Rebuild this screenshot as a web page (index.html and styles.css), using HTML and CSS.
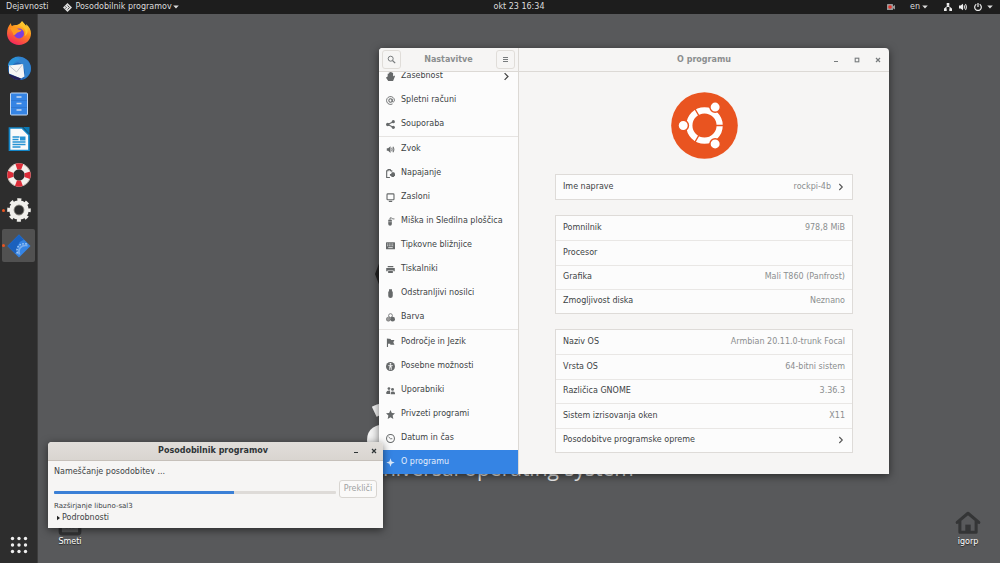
FILE: index.html
```html
<!DOCTYPE html>
<html lang="sl">
<head>
<meta charset="utf-8">
<meta name="viewport" content="width=device-width, initial-scale=1">
<title>Nastavitve</title>
<link rel="stylesheet" href="styles.css">
</head>
<body>
<svg class="defs" aria-hidden="true">
  <symbol id="chevron" viewBox="0 0 8 8"><path d="M2.3 1l3 3-3 3" fill="none" stroke="currentColor" stroke-width="1.1"/></symbol>
  <symbol id="caret" viewBox="0 0 8 8"><path d="M1.2 2.500h5.600L4 5.600z" fill="currentColor"/></symbol>
  <symbol id="min" viewBox="0 0 8 8"><path d="M2 5.500h4" stroke="currentColor"/></symbol>
  <symbol id="close" viewBox="0 0 8 8"><path d="M2 2l4 4M6 2L2 6" stroke="currentColor" stroke-width="1.2"/></symbol>
</svg>

<header class="topbar">
  <div class="topbar-group">
    <button class="top-item" type="button">Dejavnosti</button>
    <button class="top-item app-menu" type="button">
      <svg class="app-icon" viewBox="0 0 8 8"><path d="M4 0l4 4-4 4-4-4z" fill="#ddd"/><path d="M4 2.200L5.800 4 4 5.800M2 3l1 1-1 1" fill="none" stroke="#222" stroke-width=".7"/></svg>
      Posodobilnik programov
      <svg class="caret"><use href="#caret"/></svg>
    </button>
  </div>
  <button class="top-item clock" type="button">okt 23 16:34</button>
  <div class="topbar-group topbar-end">
    <svg class="icon" viewBox="0 0 8 8"><rect y="1" width="6" height="6" rx=".6" fill="#999"/><path d="M6 3.300L8 2v4.500L6 5.200z" fill="#999"/><circle cx="3" cy="4" r="1.800" fill="#e8352c"/></svg>
    <button class="top-item lang" type="button">en<svg class="caret"><use href="#caret"/></svg></button>
    <button class="top-item status" type="button" aria-label="Sistem">
      <svg class="icon" viewBox="0 0 8 8"><path d="M2.700 0h2.600v2.800H2.700zM0 5.300h2.700V8H0zM5.300 5.300H8V8H5.300z" fill="#eee"/><path d="M4 2v1.500M1.400 6V4.700L4 3.200l2.600 1.500V6" fill="none" stroke="#eee"/></svg>
      <svg class="icon" viewBox="0 0 8 8"><path d="M0 2.600h1.600L4 .7v6.600L1.600 5.400H0z" fill="#eee"/><path d="M5 2.400q1 1.600 0 3.200M6.300 1.200q2.200 2.800 0 5.600" fill="none" stroke="#ccc" stroke-width="1.200"/></svg>
      <svg class="icon" viewBox="0 0 8 8"><path d="M2.300 1.300a3.300 3.300 0 1 0 3.400 0M4 0v4" fill="none" stroke="#eee" stroke-width="1.200"/></svg>
      <svg class="caret"><use href="#caret"/></svg>
    </button>
  </div>
</header>

<div class="workspace">
  <nav class="dock" aria-label="Zaganjalnik">
    <div class="dock-apps">
      <button class="dock-item" type="button" aria-label="Firefox">
        <svg viewBox="0 0 24 24"><defs><linearGradient id="fx" x1=".8" y1="0" x2=".3" y2="1"><stop offset="0" stop-color="#ffe93b"/><stop offset=".45" stop-color="#ff8b1c"/><stop offset="1" stop-color="#f5215f"/></linearGradient></defs><path d="M15 0c2 2 3 3.500 4 6 .5-1 .2-2 0-3 3.500 3 5 6 5 9.500C24 19 18.700 24 12 24S0 19 0 12.500C0 9 1 5 4 2c0 1.500.3 2.500 1 3 1.500-1 3-1.300 5-1C12 3 14 2 15 0z" fill="url(#fx)"/><circle cx="12" cy="12.500" r="5" fill="#7a3fe0"/><path d="M3 7c3-1.500 6-.8 8.500 1.500l3 .5c-.5 2-3 2-4 2.500-1.500.8-2 3-4 2.500C6 11 4 9 3 7z" fill="#ff9a1f"/><path d="M13 5c5 1 7 6 4.500 10 3-1 4.500-6 2-10L15 1z" fill="#ffc52b"/></svg>
      </button>
      <button class="dock-item" type="button" aria-label="Thunderbird">
        <svg viewBox="0 0 24 24"><circle cx="12.500" cy="12.500" r="11.500" fill="#2165b5"/><path d="M8 1c6-2 15 2 16 11 0 5-3 9-7 11 2-5 1-13-4-16-2-1-4-.5-6 1z" fill="#3283cf"/><path d="M1 10c0-4 3-8 8-9 1 0 3 1 4 3-3 0-6 2-7 6z" fill="#2b91d8"/><path d="M2 9.500l14-1.500 1.500 12.500-3.500 2-12-5z" fill="#f5f5f5"/><path d="M2 9.500l7.500 6.500L16 8" fill="none" stroke="#bfc4cb"/><path d="M2 18l12 4.500-1 1.500C8 24 4 22 2 18z" fill="#241c54"/></svg>
      </button>
      <button class="dock-item" type="button" aria-label="Datoteke">
        <svg viewBox="0 0 24 24"><rect x="3.500" y="1" width="17" height="22" rx="1" fill="#3584e4" stroke="#c4d7ee"/><path d="M4 8.500h16M4 15.500h16" stroke="#2c72ca" stroke-width=".7"/><path d="M9.500 5h5M9.500 11.500h5M9.500 18h5" stroke="#c9d9ee" stroke-width="1.300"/></svg>
      </button>
      <button class="dock-item" type="button" aria-label="LibreOffice Writer">
        <svg viewBox="0 0 24 24"><path d="M2.500 1H15l7 7v15.500H2.500z" fill="#fafafa" stroke="#1386c8" stroke-width="1.700"/><path d="M16 0h6.500v7z" fill="#0878b5"/><path d="M5.500 10h7M5.500 12.500h6M5.500 15h13M5.500 17.500h13M5.500 20h8" stroke="#2592d3" stroke-width="1.300"/><rect x="13" y="9.500" width="5.500" height="4" fill="#2592d3"/></svg>
      </button>
      <button class="dock-item" type="button" aria-label="Pomoč">
        <svg viewBox="0 0 24 24"><circle cx="12" cy="12" r="8.700" fill="none" stroke="#f3f1ed" stroke-width="6"/><circle cx="12" cy="12" r="8.700" fill="none" stroke="#dc2c38" stroke-width="6" stroke-dasharray="6 7.666" stroke-dashoffset="3"/><circle cx="12" cy="12" r="11.500" fill="none" stroke="#a39991" stroke-width=".8" stroke-dasharray="8 10" stroke-dashoffset="-5"/></svg>
      </button>
      <button class="dock-item running" type="button" aria-label="Nastavitve">
        <svg viewBox="0 0 24 24"><circle cx="12" cy="12" r="10.300" fill="none" stroke="#f0efeb" stroke-width="3" stroke-dasharray="4 4.090" stroke-dashoffset="2"/><circle cx="12" cy="12" r="7.500" fill="none" stroke="#f0efeb" stroke-width="4.600"/><circle cx="12" cy="12" r="5" fill="none" stroke="#b9b6ad" stroke-width=".7"/></svg>
      </button>
      <button class="dock-item running active" type="button" aria-label="Posodobilnik programov">
        <svg viewBox="0 0 24 24"><path d="M12 .5L23.500 12 12 23.500.5 12z" fill="#3584e4"/><path d="M12 .5L17 6c-5 1-7 5-6 11l-3 2.500L.5 12z" fill="#1b61bd"/><path d="M10.500 19.500C8.500 13 13 8.500 20 10" fill="none" stroke="#9cc6f6" stroke-width="1.600" stroke-dasharray="1.700 1.300"/><path d="M12.500 20.500C10.500 15 14 10.500 20.500 11.500" fill="none" stroke="#79adee" stroke-width="1.800"/></svg>
      </button>
    </div>
    <button class="dock-item" type="button" aria-label="Prikaži programe">
      <svg viewBox="0 0 24 24" fill="#eee"><circle cx="5.500" cy="5.500" r="1.700"/><circle cx="12" cy="5.500" r="1.700"/><circle cx="18.500" cy="5.500" r="1.700"/><circle cx="5.500" cy="12" r="1.700"/><circle cx="12" cy="12" r="1.700"/><circle cx="18.500" cy="12" r="1.700"/><circle cx="5.500" cy="18.500" r="1.700"/><circle cx="12" cy="18.500" r="1.700"/><circle cx="18.500" cy="18.500" r="1.700"/></svg>
    </button>
  </nav>

  <main class="desktop">
    <svg class="wall-mark" viewBox="0 0 30 34"><path d="M0 17L5 4l10-4v34L5 30z" fill="#222"/></svg>
    <div class="wall-name" aria-hidden="true">a</div>
    <div class="wall-tag">universal operating system</div>

    <a class="shortcut trash" href="#smeti">
      <svg viewBox="0 0 24 24"><path d="M3 2v18q0 2 2 2h14q2 0 2-2V2" fill="none" stroke="#333436" stroke-width="3"/><path d="M8 16h8" stroke="#333436" stroke-width="1.500" stroke-dasharray="2 1"/></svg>
      Smeti
    </a>
    <a class="shortcut home" href="#igorp">
      <svg viewBox="0 0 24 24"><path d="M2 11.500L12 3l10 8.500M4.500 10v10.500h15V10" fill="none" stroke="#343536" stroke-width="2.800" stroke-linecap="round" stroke-linejoin="round"/><path d="M9.500 21v-7.500h5V21z" fill="#343536"/></svg>
      igorp
    </a>

    <section class="window settings" aria-label="Nastavitve">
      <div class="sidebar">
        <div class="headerbar side-head">
          <button class="tool" type="button" aria-label="Išči"><svg viewBox="0 0 9 9"><circle cx="3.700" cy="3.700" r="2.500" fill="none" stroke="currentColor"/><path d="M5.500 5.500l2.700 2.700" stroke="currentColor" stroke-width="1.200"/></svg></button>
          <h2>Nastavitve</h2>
          <button class="tool" type="button" aria-label="Meni"><svg viewBox="0 0 9 9"><path d="M2 2.500h5M2 4.500h5M2 6.500h5" stroke="currentColor"/></svg></button>
        </div>
        <nav class="side-list">
          <a href="#zasebnost"><svg viewBox="0 0 8 8"><path d="M1.500 4V1.500h1V.5h1.200V0H5v.6h1.300V4l1-.8.7.6L6.300 8H2L0 5l.6-.6z" fill="currentColor"/></svg><span>Zasebnost</span><svg class="go"><use href="#chevron"/></svg></a>
          <a href="#racuni"><svg viewBox="0 0 8 8"><circle cx="4" cy="4" r="1.500" fill="none" stroke="currentColor" stroke-width=".9"/><path d="M5.500 2.500V4.500q.2 1 1 .8 1-.4 1-1.500A3.500 3.500 0 1 0 5.800 7" fill="none" stroke="currentColor" stroke-width=".8"/></svg><span>Spletni računi</span></a>
          <a href="#souporaba"><svg viewBox="0 0 8 8"><path d="M6.500 1.500L1.500 4l5 2.500" fill="none" stroke="currentColor"/><g fill="currentColor"><circle cx="6.500" cy="1.500" r="1.400"/><circle cx="1.500" cy="4" r="1.500"/><circle cx="6.500" cy="6.500" r="1.400"/></g></svg><span>Souporaba</span></a>
          <a class="group" href="#zvok"><svg viewBox="0 0 8 8"><path d="M.7 2.800h1.200L4 1v6L1.900 5.200H.7z" fill="currentColor"/><path d="M5 2.500q.9 1.500 0 3M6.100 1.500q1.800 2.500 0 5" fill="none" stroke="currentColor" stroke-width=".9"/></svg><span>Zvok</span></a>
          <a href="#napajanje"><svg viewBox="0 0 8 8"><path d="M3.500 7.500H.6V1.500h1.200V.6h2v.9h1.300v1" fill="none" stroke="currentColor"/><path d="M5.200 2.800h2.200v1H8v2.400h-.8V7h-2l-1-1H3.500V4.500h1z" fill="currentColor"/></svg><span>Napajanje</span></a>
          <a href="#zasloni"><svg viewBox="0 0 8 8"><rect x=".9" y=".8" width="6.200" height="5.200" rx=".7" fill="none" stroke="currentColor"/><path d="M2.500 7.400h3" stroke="currentColor"/></svg><span>Zasloni</span></a>
          <a href="#miska"><svg viewBox="0 0 8 8"><path d="M2 2.500h3.200V6.200a1.600 1.600 0 0 1-3.200 0z" fill="currentColor"/><path d="M3.600 2.500V.8H5l.8.9h1.700" fill="none" stroke="currentColor" stroke-width=".8"/><path d="M2 4.200h3.200" stroke="#fcfcfc" stroke-width=".4"/></svg><span>Miška in Sledilna ploščica</span></a>
          <a href="#tipkovne"><svg viewBox="0 0 8 8"><rect y="1" width="8" height="6.300" rx=".5" fill="currentColor"/><path d="M1 2.700h6M1 4.200h6" stroke="#fcfcfc" stroke-width=".7" stroke-dasharray=".9 .6"/><path d="M2 5.900h4" stroke="#fcfcfc" stroke-width=".7"/></svg><span>Tipkovne bližnjice</span></a>
          <a href="#tiskalniki"><svg viewBox="0 0 8 8"><path d="M1.500.8h5v1.300h-5zM.2 2.600h7.600v3H6.600v-1H1.400v1H.2zM1.900 5.100h4.200v2H1.900z" fill="currentColor"/></svg><span>Tiskalniki</span></a>
          <a href="#nosilci"><svg viewBox="0 0 8 8"><path d="M2.700.3h2.600v2H6v3.900Q6 7.900 4 7.900T2 6.200V2.300h.7z" fill="currentColor"/></svg><span>Odstranljivi nosilci</span></a>
          <a href="#barva"><svg viewBox="0 0 8 8"><circle cx="4" cy="2.300" r="1.700" fill="none" stroke="currentColor" stroke-width=".7"/><circle cx="2.100" cy="5.500" r="1.800" fill="#999" stroke="currentColor" stroke-width=".5"/><circle cx="5.900" cy="5.500" r="2.100" fill="currentColor"/></svg><span>Barva</span></a>
          <a class="group" href="#jezik"><svg viewBox="0 0 8 8"><path d="M.8.5v7.500h1V5h2v1h3.700L6.500 3.700l1-2H4.300V.8z" fill="currentColor"/></svg><span>Področje in Jezik</span></a>
          <a href="#moznosti"><svg viewBox="0 0 8 8"><circle cx="4" cy="4" r="4" fill="currentColor"/><circle cx="4" cy="1.600" r=".8" fill="#fff"/><path d="M2 3.200h4M4 3v2M3.300 7V4h1.400v3" fill="none" stroke="#fff" stroke-width=".7"/></svg><span>Posebne možnosti</span></a>
          <a href="#uporabniki"><svg viewBox="0 0 8 8" fill="currentColor"><circle cx="2.600" cy="2.300" r="1.200"/><path d="M.3 7V5.500Q.6 4 2.600 4h1v3z"/><circle cx="5.800" cy="3" r="1.300"/><path d="M4.200 7.400V6q.3-1.200 1.800-1.200T8 6v1.400z"/></svg><span>Uporabniki</span></a>
          <a href="#privzeti"><svg viewBox="0 0 8 8"><path d="M4 0l1.200 2.600 2.800.3-2.100 2L6.500 8 4 6.500 1.500 8l.6-3.100L0 2.900l2.800-.3z" fill="currentColor"/></svg><span>Privzeti programi</span></a>
          <a href="#datum"><svg viewBox="0 0 8 8"><circle cx="4" cy="4" r="3.500" fill="none" stroke="currentColor" stroke-width=".9"/><path d="M2.200 2.500L4 4.200h1.600" fill="none" stroke="currentColor" stroke-width=".8"/></svg><span>Datum in čas</span></a>
          <a class="selected" href="#o-programu" aria-current="page"><svg viewBox="0 0 8 8"><path d="M4 .3L5 3l2.700 1L5 5 4 7.700 3 5 .3 4 3 3z" fill="currentColor"/></svg><span>O programu</span></a>
        </nav>
      </div>
      <div class="content">
        <div class="headerbar main-head">
          <h1>O programu</h1>
          <div class="controls">
            <button type="button" aria-label="Skrči"><svg><use href="#min"/></svg></button>
            <button type="button" aria-label="Razpni"><svg viewBox="0 0 8 8"><rect x="2.200" y="2.200" width="3.600" height="3.600" fill="none" stroke="currentColor" stroke-width="1.100"/></svg></button>
            <button type="button" aria-label="Zapri"><svg><use href="#close"/></svg></button>
          </div>
        </div>
        <div class="about">
          <svg class="logo" viewBox="-34 -34 68 68" role="img" aria-label="Ubuntu">
            <circle r="33.800" fill="#e95420"/>
            <circle r="15.400" fill="none" stroke="#fff" stroke-width="6.300"/>
            <path d="M10 0h10M-5-8.700l-5-8.700M-5 8.700l-5 8.700" stroke="#e95420" stroke-width="1.300"/>
            <g fill="#fff" stroke="#e95420" stroke-width="1.500"><circle cx="-21.600" r="5.300"/><circle cx="10.800" cy="-18.700" r="5.300"/><circle cx="10.800" cy="18.700" r="5.300"/></g>
          </svg>
          <div class="card"><button class="row" type="button"><span>Ime naprave</span><span class="value">rockpi-4b</span><svg class="go"><use href="#chevron"/></svg></button></div>
          <div class="card hardware">
            <div class="row"><span>Pomnilnik</span><span class="value">978,8 MiB</span></div>
            <div class="row"><span>Procesor</span></div>
            <div class="row"><span>Grafika</span><span class="value">Mali T860 (Panfrost)</span></div>
            <div class="row"><span>Zmogljivost diska</span><span class="value">Neznano</span></div>
          </div>
          <div class="card software">
            <div class="row"><span>Naziv OS</span><span class="value">Armbian 20.11.0-trunk Focal</span></div>
            <div class="row"><span>Vrsta OS</span><span class="value">64-bitni sistem</span></div>
            <div class="row"><span>Različica GNOME</span><span class="value">3.36.3</span></div>
            <div class="row"><span>Sistem izrisovanja oken</span><span class="value">X11</span></div>
            <button class="row" type="button"><span>Posodobitve programske opreme</span><svg class="go"><use href="#chevron"/></svg></button>
          </div>
        </div>
      </div>
    </section>

    <section class="window updater" aria-label="Posodobilnik programov">
      <div class="updater-head">
        <h2>Posodobilnik programov</h2>
        <div class="controls">
          <button type="button" aria-label="Skrči"><svg><use href="#min"/></svg></button>
          <button type="button" aria-label="Zapri"><svg><use href="#close"/></svg></button>
        </div>
      </div>
      <div class="updater-body">
        <label for="napredek">Nameščanje posodobitev ...</label>
        <div class="progress-row">
          <progress id="napredek" max="100" value="64"></progress>
          <button class="cancel" type="button" disabled>Prekliči</button>
        </div>
        <p class="step">Razširjanje libuno-sal3</p>
        <button class="details" type="button"><svg viewBox="0 0 4 6"><path d="M0 0l4 3-4 3z" fill="#222"/></svg>Podrobnosti</button>
      </div>
    </section>
  </main>
</div>
</body>
</html>
```
FILE: styles.css
```css
* { box-sizing: border-box; }
body {
  margin: 0;
  min-height: 100vh;
  display: flex;
  flex-direction: column;
  overflow: hidden;
  background: #58595b;
  color: #3d4345;
  font: 8px/10px "DejaVu Sans", sans-serif;
}
button {
  font: inherit;
  color: inherit;
  background: none;
  border: 0;
  padding: 0;
  margin: 0;
}
a { color: inherit; text-decoration: none; }
h1, h2, p { margin: 0; font-size: 8px; line-height: 10px; }
svg { display: block; flex: none; width: 8px; height: 8px; }
.defs { display: none; }

.topbar {
  display: grid;
  grid-template-columns: 1fr auto 1fr;
  align-items: center;
  height: 14px;
  padding: 0 6px;
  background: #1d1d1d;
  color: #dcdcdc;
}
.topbar-group, .top-item { display: flex; align-items: center; }
.topbar-group { gap: 15px; }
.topbar-end { justify-content: flex-end; }
.app-menu { gap: 3px; }
.app-menu .app-icon { width: 9px; height: 9px; }
.app-menu .caret { margin-left: -3px; }
.clock { padding-left: 38px; }
.lang { gap: 1px; }
.status { gap: 7px; }
.status .caret { margin-left: -3px; }

.workspace { flex: 1; display: flex; }
.dock {
  width: 38px;
  padding: 2px 2px 2px;
  display: flex;
  flex-direction: column;
  justify-content: space-between;
  background: #2d2d2d;
  border-right: 1px solid #3d3d3d;
}
.dock-apps {
  height: 246px;
  display: flex;
  flex-direction: column;
  justify-content: space-between;
}
.dock-item {
  position: relative;
  width: 33px;
  height: 33px;
  display: flex;
  align-items: center;
  justify-content: center;
  border-radius: 2px;
}
.dock-item svg { width: 24px; height: 24px; }
.dock-item.active { background: #515151; }
.running::before {
  content: "";
  position: absolute;
  left: 0;
  top: 15px;
  width: 3px;
  height: 3px;
  border-radius: 50%;
  background: #e95420;
}

.desktop { position: relative; flex: 1; }
.wall-mark { position: absolute; left: 337px; top: 243px; width: 30px; height: 34px; }
.wall-name {
  position: absolute;
  left: 325px;
  top: 357px;
  color: #f4f4f4;
  font: bold 96px/96px "Open Sans", sans-serif;
}
.wall-tag {
  position: absolute;
  left: 332px;
  top: 439px;
  color: #f0f0f0;
  font: 21px/30px "Open Sans", sans-serif;
  white-space: nowrap;
}
.shortcut {
  position: absolute;
  display: flex;
  flex-direction: column;
  align-items: center;
  gap: 1px;
  color: #fff;
  text-shadow: 0 1px 1px #222;
}
.shortcut svg { width: 26px; height: 26px; }
.trash { left: 19px; top: 496px; }
.home { right: 19px; top: 496px; }

.window { position: absolute; box-shadow: 0 2px 8px rgba(0, 0, 0, .55); }
.settings {
  left: 341px;
  top: 34px;
  width: 510px;
  display: flex;
  border-radius: 4px 4px 0 0;
  background: #f6f5f4;
  overflow: hidden;
}
.headerbar {
  display: flex;
  align-items: center;
  justify-content: space-between;
  height: 24px;
  flex: none;
  border-bottom: 1px solid #dcd9d5;
  color: #8b8e8f;
}
.sidebar {
  position: relative;
  width: 140px;
  display: flex;
  flex-direction: column;
  border-right: 1px solid #dcd9d5;
  background: #fcfcfc;
}
.side-head { padding: 0 3px; background: #f6f5f4; }
.tool {
  width: 19px;
  height: 19px;
  display: grid;
  place-items: center;
  border: 1px solid #e0ddd9;
  border-radius: 3px;
  color: #777b7d;
}
.tool svg { width: 9px; height: 9px; }
.side-list {
  flex: 1 0 0;
  min-height: 0;
  display: flex;
  flex-direction: column;
  justify-content: flex-end;
  overflow: hidden;
}
.side-list a {
  flex: none;
  height: 24px;
  padding: 0 7px;
  display: flex;
  align-items: center;
  gap: 6px;
  white-space: nowrap;
}
.side-list svg { width: 9px; height: 9px; color: #66696a; }
.side-list .go { margin-left: auto; color: #444; }
.side-list .group { height: 25px; border-top: 1px solid #e6e4e2; }
.side-list .selected { background: #3584e4; color: #e4effc; }
.side-list .selected svg { color: #dceafb; }

.content { flex: 1; display: flex; flex-direction: column; }
.main-head { display: grid; grid-template-columns: 1fr auto 1fr; }
.main-head h1 { grid-column: 2; }
.controls { display: flex; justify-content: flex-end; color: #777b7c; }
.main-head .controls { gap: 13px; padding-right: 7px; }
.about {
  padding: 20px 36px 21px;
  display: flex;
  flex-direction: column;
  gap: 15px;
}
.logo { width: 67px; height: 67px; align-self: center; }
.card {
  display: grid;
  grid-auto-rows: 1fr;
  min-height: 26px;
  border: 1px solid #dedbd8;
  background: #fcfcfc;
}
.hardware { min-height: 99px; }
.software { min-height: 124px; }
.row {
  display: flex;
  align-items: center;
  gap: 6px;
  padding: 0 7px;
  text-align: left;
}
.row + .row { border-top: 1px solid #e9e7e5; }
.value { margin-left: auto; color: #8b8e8f; }
.row .go { color: #555; }
.row > span:first-child + .go { margin-left: auto; }

.updater {
  left: 10px;
  top: 428px;
  width: 335px;
  border-radius: 4px 4px 0 0;
  background: #f6f5f4;
}
.updater-head {
  display: grid;
  grid-template-columns: 1fr auto 1fr;
  align-items: center;
  height: 19px;
  padding-right: 5px;
  border-bottom: 1px solid #c6c0ba;
  border-radius: 4px 4px 0 0;
  background: linear-gradient(#e1deda, #d9d5d0);
  color: #2e3436;
}
.updater-head h2 { grid-column: 2; }
.updater-head .controls { gap: 10px; color: #2e3436; }
.updater-body { padding: 6px 6px 5px; }
.updater-body label { display: block; }
.progress-row { display: flex; align-items: center; gap: 3px; margin: 3px 0 2px; }
progress {
  flex: 1;
  min-width: 0;
  height: 3px;
  margin-top: 7px;
  appearance: none;
  border: 0;
  border-radius: 1px;
  overflow: hidden;
}
progress::-webkit-progress-bar { background: #dedbd8; }
progress::-webkit-progress-value { background: #3b80d6; }
.cancel {
  width: 38px;
  height: 18px;
  border: 1px solid #d8d5d1;
  border-radius: 3px;
  background: #faf9f8;
  color: #a0a2a2;
}
.step { padding-top: 1px; font-size: 7px; }
.details { display: flex; align-items: center; gap: 2px; margin: 2px 0 0 3px; }
.details svg { width: 3px; height: 6px; }
```
